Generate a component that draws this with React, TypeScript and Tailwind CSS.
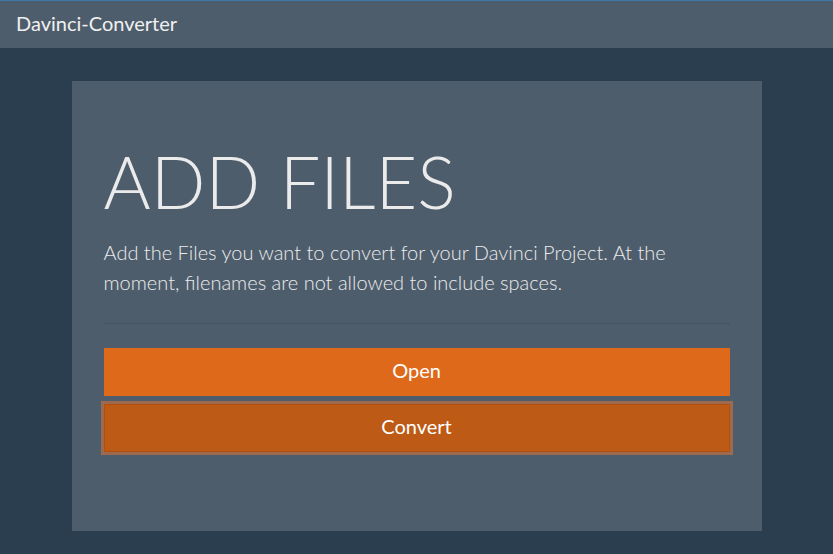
import React from "react";

export default function App() {
  return (
    <div
      className="min-h-[554px] w-full bg-[#2b3e50] text-[#ebebeb]"
      style={{ fontFamily: "Lato, 'Noto Sans', sans-serif" }}
    >
      <div className="h-[48px] border-t border-[#3d78a6] bg-[#4e5d6c] flex items-center px-[16px]">
        <span className="text-[20px] leading-none font-normal text-[#f0f0f0] -mt-[3px]">
          Davinci-Converter
        </span>
      </div>
      <div className="flex justify-center pt-[33px]">
        <div className="w-[690px] h-[450px] bg-[#4e5d6c] px-[32px] pt-[57px]">
          <h1 className="text-[72px] leading-[1.2] font-light text-[#ebebeb] m-0">
            ADD FILES
          </h1>
          <p className="mt-[13px] text-[20px] leading-[30px] font-light text-[#ebebeb]">
            Add the Files you want to convert for your Davinci Project. At the
            moment, filenames are not allowed to include spaces.
          </p>
          <div className="mt-[26px] h-px bg-[#46535f]" />
          <div className="mt-[24px] flex flex-col gap-[8px]">
            <button className="h-[48px] w-full bg-[#df691a] text-white text-[20px] leading-[30px] pb-[5px]">
              Open
            </button>
            <button className="h-[48px] w-full bg-[#bd5a16] border border-[#b24f10] text-white text-[20px] leading-[30px] pb-[5px] shadow-[0_0_0_3px_#9d6a50]">
              Convert
            </button>
          </div>
        </div>
      </div>
    </div>
  );
}
